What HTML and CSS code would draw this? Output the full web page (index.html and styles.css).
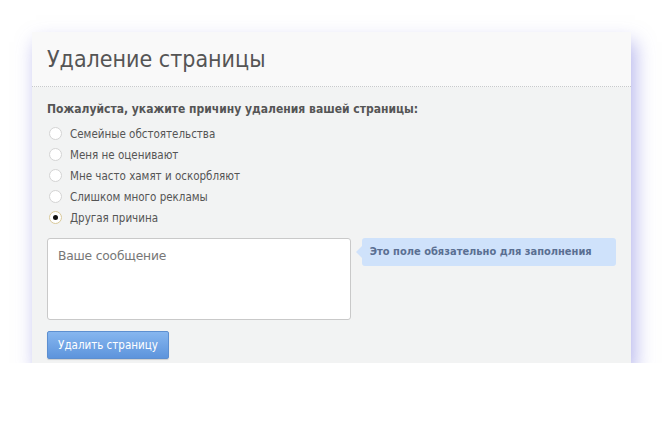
FILE: index.html
```html
<!DOCTYPE html>
<html lang="ru">
<head>
<meta charset="utf-8">
<title>Удаление страницы</title>
<link rel="stylesheet" href="styles.css">
</head>
<body>
<div class="card">
  <div class="head"><h1 class="title">Удаление страницы</h1></div>
  <div class="body">
    <div class="question">Пожалуйста, укажите причину удаления вашей страницы:</div>
    <ul class="options">
      <li class="opt"><span class="radio"></span>Семейные обстоятельства</li>
      <li class="opt"><span class="radio"></span>Меня не оценивают</li>
      <li class="opt"><span class="radio"></span>Мне часто хамят и оскорбляют</li>
      <li class="opt"><span class="radio"></span>Слишком много рекламы</li>
      <li class="opt"><span class="radio checked"></span>Другая причина</li>
    </ul>
    <div class="msg-row">
      <div class="textarea">Ваше сообщение</div>
      <div class="tip">Это поле обязательно для заполнения</div>
    </div>
    <button class="btn">Удалить страницу</button>
  </div>
</div>
</body>
</html>
```
FILE: styles.css
```css
html, body { margin: 0; padding: 0; background: #fff; }
body { padding: 32px 0 0 32px; font-family: "DejaVu Sans Condensed", "DejaVu Sans", sans-serif; }
.card {
  width: 599px;
  height: 331px;
  background: #f2f3f3;
  box-shadow: 4px 10px 18px rgba(110, 110, 220, 0.5);
  box-sizing: border-box;
}
.head {
  height: 55px;
  background: #f9f9f9;
  border-bottom: 1px dotted #c8cacc;
  box-sizing: border-box;
  padding: 12px 0 0 15px;
}
.title {
  margin: 0;
  font-weight: normal;
  font-size: 23px;
  color: #555;
  line-height: 30px;
}
.body { padding: 14px 15px 0 15px; }
.question {
  font-size: 12px;
  font-weight: bold;
  color: #555;
  line-height: 16px;
}
.options { list-style: none; margin: 6px 0 0 0; padding: 0; }
.opt {
  display: flex;
  align-items: center;
  height: 21px;
  font-size: 11.5px;
  color: #555;
}
.radio {
  width: 11px; height: 11px;
  border-radius: 50%;
  border: 1px solid #d4d4d4;
  background: #fff;
  margin: 0 8px 0 2px;
  position: relative;
  box-sizing: content-box;
}
.radio.checked { border-color: #d9c99a; }
.radio.checked::after {
  content: "";
  position: absolute;
  left: 3px; top: 3px;
  width: 5px; height: 5px;
  border-radius: 50%;
  background: #111;
}
.msg-row { display: flex; margin-top: 10px; align-items: flex-start; }
.textarea {
  width: 306px; height: 82px;
  box-sizing: border-box;
  background: #fff;
  border: 1px solid #c9c9c9;
  border-radius: 3px;
  padding: 10px 10px;
  font-family: "DejaVu Sans", sans-serif;
  font-size: 12.3px;
  color: #777;
  letter-spacing: -0.2px;
}
.tip {
  position: relative;
  margin-left: 11px;
  width: 256px; height: 28px;
  box-sizing: border-box;
  background: #cfe2fb;
  border-radius: 3px;
  padding: 0 0 0 8px;
  line-height: 28px;
  font-size: 11px;
  font-weight: bold;
  color: #5a6f92;
}
.tip::before {
  content: "";
  position: absolute;
  left: -6px; top: 8px;
  border-top: 6px solid transparent;
  border-bottom: 6px solid transparent;
  border-right: 6px solid #cfe2fb;
}
.btn {
  margin-top: 11px;
  width: 122px; height: 28px;
  border: 1px solid #5d8fd0;
  border-radius: 2px;
  background: linear-gradient(#86b6ef, #5d94dc);
  color: #fff;
  font-family: inherit;
  font-size: 11.5px;
  box-shadow: 0 1px 1px rgba(0,0,0,0.15);
  padding: 0;
}
```
